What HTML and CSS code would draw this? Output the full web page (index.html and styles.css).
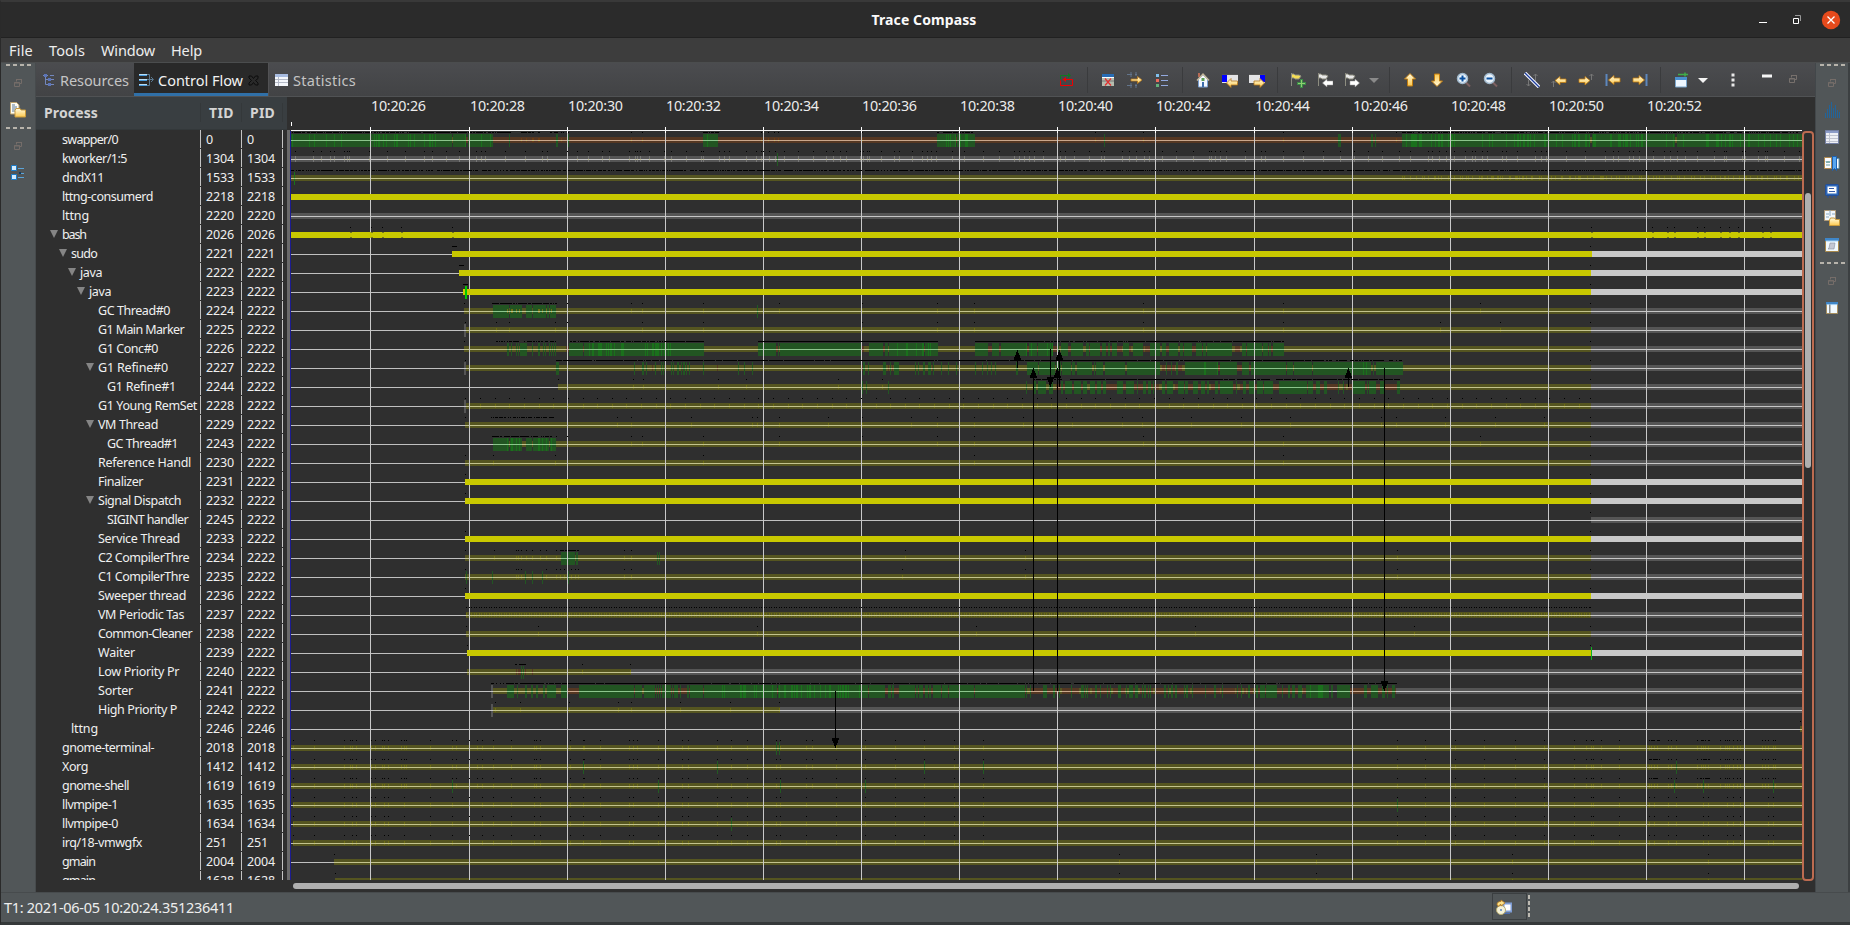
FILE: index.html
```html
<!DOCTYPE html>
<html lang="en">
<head>
<meta charset="utf-8">
<title>Trace Compass</title>
<link rel="stylesheet" href="styles.css">
</head>
<body>
<svg class="defs" width="0" height="0">
  <defs>
    <linearGradient id="gold" x1="0" y1="0" x2="0" y2="1"><stop offset="0" stop-color="#fffbe0"/><stop offset="1" stop-color="#fcc84e"/></linearGradient>
    <symbol id="arrow-left" viewBox="0 0 16 16"><path d="M1.500 8 6 3.500v2.500h6v4h-6v2.500z" fill="url(#gold)" stroke="#c07c10"/></symbol>
    <symbol id="arrow-up" viewBox="0 0 16 16"><path d="M8 1.500 13.500 7h-3v7h-5v-7h-3z" fill="url(#gold)" stroke="#c07c10"/></symbol>
    <symbol id="restore" viewBox="0 0 10 10"><path d="M3.500 3.500v-2h5v4h-2M1.500 4.500h5v4h-5zM3 1.500h6M1 5h6" fill="none" stroke="currentColor"/></symbol>
    <symbol id="flag" viewBox="0 0 16 16"><path d="M1.500 1v13M2 2h2l1 1h4l2 1-2 3H5L4 6H2" fill="currentColor" stroke="#8d8d80"/></symbol>
    <symbol id="lens" viewBox="0 0 16 16"><path d="M9.500 10 14 14.500" stroke="#7d6060" stroke-width="2"/><circle cx="6.500" cy="6.500" r="5" fill="#eaf4fc" stroke="#a0b8cc" stroke-width="1.500"/><path d="M3.500 6.500h6" stroke="#0a50a0" stroke-width="2"/></symbol>
    <symbol id="window" viewBox="0 0 16 16"><path d="M1.500 1.500h13v13h-13z" fill="#f2faff" stroke="#a8894c"/><path d="M1 1h14v3H1z" fill="#3f86c8"/><path d="M2 4h12" stroke="#a4d0f4"/></symbol>
  </defs>
</svg>
<div class="app">
  <header class="titlebar">
    <span class="title fit" data-w="105">Trace Compass</span>
    <div class="win">
      <svg width="16" height="16"><path d="M4 10.500h8" stroke="#fff"/></svg>
      <svg width="16" height="16"><path d="M4.500 6.500h5v5h-5z" fill="none" stroke="#fff"/><path d="M6 3.500h5.500v5.500" fill="none" stroke="#999"/></svg>
      <svg width="20" height="20"><circle cx="10" cy="10" r="9.200" fill="#e64a1c"/><path d="m6.500 6.500 7 7m0-7-7 7" stroke="#fff" stroke-width="1.300"/></svg>
    </div>
  </header>
  <nav class="menu"><span class="fit" data-w="24">File</span><span class="fit" data-w="36">Tools</span><span class="fit" data-w="54">Window</span><span class="fit" data-w="31">Help</span></nav>
  <div class="main">
    <aside class="side left">
      <i class="grip"></i>
      <svg class="r1" width="10" height="10"><use href="#restore"/></svg>
      <svg class="r2" width="16" height="16"><path d="M.5.500h6l2.500 2.500v9h-8.500z" fill="#fdfdf4" stroke="#bda26c"/><path d="M2 3h3M2 5h5M2 7h4M2 9h3" stroke="#5a7898"/><path d="M5 8.500l1-2h4l1 1.500h4.500v7h-10.500z" fill="url(#gold)" stroke="#c99a3c"/></svg>
      <i class="grip g2"></i>
      <svg class="r1 r3" width="10" height="10"><use href="#restore"/></svg>
      <svg class="r4" width="14" height="15"><path d="M.5.500h5v5h-5zM.5 9.500h5v5h-5z" fill="#d4ecff" stroke="#1b7cc8"/><path d="M7 3.500h6M9 8.500h4M7 12.500h6" stroke="#5ba4d8"/><path d="M8 7h2v2H8z" fill="#0d3c66"/></svg>
    </aside>
    <section class="part">
      <div class="tabs">
        <div class="tab t1"><svg width="12" height="13"><path d="M2.500 2v9.500M2.500 6.500h4M2.500 11.500h4M0 2.500h5M7 2.500h4M8 6.500h3M8 11.500h3" stroke="#7387bd" fill="none"/><path d="M1 1h3v3H1zM5 5h3v3H5zM5 10h3v3H5z" fill="#5c75b8"/></svg><span class="fit" data-w="69">Resources</span></div>
        <div class="tab active"><svg width="16" height="14"><path d="M0 2h8M0 7h8M0 12h8" stroke="#4a9bdc" stroke-width="2"/><path d="M0 1.500h8M0 6.500h8M0 11.500h8" stroke="#b7dcf5"/><path d="M8 1.500h2.500v11H8M8 6.500h6M12 4l2.500 2.500L12 9" stroke="#5a7890" fill="none"/></svg><span class="fit" data-w="85">Control Flow</span><svg class="x" width="11" height="11"><path d="M1 1h2.500l2 2.500 2-2.500H10v2.500L7.500 5.500 10 8v2H7.500l-2-2.500-2 2.500H1V8l2.500-2.500L1 3z" fill="#292929" stroke="#0c0c0c"/></svg></div>
        <div class="tab t3"><svg width="13" height="12"><path d="M0 0h13v12H0z" fill="#f4f7fc"/><path d="M0 0h13v3H0z" fill="#a7bbe0"/><path d="M0 5.500h13M0 8.500h13M3.500 3v9" stroke="#b4bac8"/></svg><span class="fit" data-w="63">Statistics</span></div>
        <div class="tools">
          <b><svg viewBox="0 0 16 16"><path d="M1.500 8.500v5h12v-6h-8" stroke="#f00000" fill="none"/><path d="M7 5 3.500 7.500 7 10z" fill="#f00000"/><path d="M1.500 7V3.500h9" stroke="#0f7a22" fill="none"/><path d="M9 1l3 2.500L9 6z" fill="#0f7a22"/></svg></b>
          <hr>
          <b><svg viewBox="0 0 16 16"><path d="M2 3h12v11H2z" fill="#b5bcae"/><path d="M2 2h12v3H2z" fill="#286cb4"/><path d="M2 5.500h12" stroke="#fff"/><path d="M2 9h12" stroke="#777"/><path d="m5 6.500 6 7m0-7-6 7" stroke="#e03030" stroke-width="1.200"/></svg></b>
          <b><svg viewBox="0 0 16 16"><path d="M0 2.500h5M4 0v5M0 13.500h5M4 11v5M8 2.500h2M9 0v4M8 13.500h2M9 12v4" stroke="#63758c"/><path d="M4 7h6.500V4.500L15 8l-4.500 3.500V9H4z" fill="url(#gold)" stroke="#b8791c" stroke-width=".8"/></svg></b>
          <b><svg viewBox="0 0 16 16"><path d="M2 2h3v3H2z" fill="#7fc0ee"/><path d="M2 7h3v3H2z" fill="#ed6a5a"/><path d="M2 12h3v3H2z" fill="#63b27c"/><path d="M7 3.500h7M7 8.500h7M7 13.500h7" stroke="#93a9de"/></svg></b>
          <hr>
          <b><svg viewBox="0 0 16 16"><path d="M3.500 7v8h9V7L8 2.500z" fill="#f3f8ff" stroke="#7a9fd0"/><path d="M2 8.500 8 2l6 6.500" stroke="#c5b89a" stroke-width="1.500" fill="none"/><path d="M3 1h2v4H3z" fill="#b66b55"/><path d="M6.500 6h3v3h-3z" fill="#5b9c52"/><path d="M7 10h2v5H7z" fill="#3c6dac"/></svg></b>
          <b><svg viewBox="0 0 16 16"><path d="M0 2h16v9H0z" fill="#e4e4e6"/><path d="M0 2h16v1H0z" fill="#555"/><path d="M0 3h5v7H0z" fill="#0000ff"/><path d="M4.500 11 9 6.500V9h6.500v4H9v2.500z" fill="url(#gold)" stroke="#b8791c" stroke-width=".8"/></svg></b>
          <b><svg viewBox="0 0 16 16"><path d="M0 2h16v9H0z" fill="#e4e4e6"/><path d="M0 2h16v1H0z" fill="#555"/><path d="M11 3h5v7h-5z" fill="#0000ff"/><path d="M15.500 11 11 6.500V9H5v4h6v2.500z" fill="url(#gold)" stroke="#b8791c" stroke-width=".8"/></svg></b>
          <hr>
          <b><svg viewBox="0 0 16 16" color="#f5dd55"><use href="#flag"/><path d="M11.500 7v9M7 11.500h9" stroke="#3c8a48" stroke-width="3"/><path d="M11.500 8v7M8 11.500h7" stroke="#8ed070"/></svg></b>
          <b><svg viewBox="0 0 16 16" color="#e8e8e8"><use href="#flag"/><path d="M5.500 11 10 7v2h6v4h-6v2z" fill="#fff" stroke="#999" stroke-width=".5"/></svg></b>
          <b><svg viewBox="0 0 16 16" color="#e8e8e8"><use href="#flag"/><path d="M15.500 11 11 7v2H6v4h5v2z" fill="#fff" stroke="#999" stroke-width=".5"/></svg></b>
          <b class="dd"><svg viewBox="0 0 16 16"><path d="M3 6h10l-5 5z" fill="#8a8a8a"/></svg></b>
          <hr>
          <b><svg viewBox="0 0 16 16"><use href="#arrow-up"/></svg></b>
          <b><svg class="flipy" viewBox="0 0 16 16"><use href="#arrow-up"/></svg></b>
          <b><svg viewBox="0 0 16 16"><use href="#lens"/><path d="M6.500 3.500v6" stroke="#0a50a0" stroke-width="2"/></svg></b>
          <b><svg viewBox="0 0 16 16"><use href="#lens"/></svg></b>
          <hr>
          <b><svg viewBox="0 0 16 16"><path d="M4.500 14V8M11.500 9V2M9.500 4l2-2 2 2M2.500 12l2 2 2-2" stroke="#777" fill="none"/><path d="m1 1 14 14" stroke="#f4f6ff" stroke-width="3.400"/><path d="m1 1 14 14" stroke="#1c3c9c" stroke-width="1.200"/></svg></b>
          <b><svg viewBox="0 0 16 16"><path d="M2.500 15V9M.5 11l2-2 2 2" stroke="#777" fill="none"/><path d="M4 8.500 9 4.500v2.500h6v3.500H9V13z" fill="url(#gold)" stroke="#c07c10" stroke-width=".8"/></svg></b>
          <b><svg viewBox="0 0 16 16"><path d="M13.500 8V2M11.500 4l2-2 2 2" stroke="#777" fill="none"/><path d="M12 8.500 7 4.500v2.500H1v3.500h6V13z" fill="url(#gold)" stroke="#c07c10" stroke-width=".8"/></svg></b>
          <b><svg viewBox="0 0 16 16"><path d="M1.500 2v12" stroke="#5d87bd" stroke-width="2"/><path d="M3.500 8 9 3.500V6h6v4H9v2.500z" fill="url(#gold)" stroke="#c07c10" stroke-width=".8"/></svg></b>
          <b><svg viewBox="0 0 16 16"><path d="M14.500 2v12" stroke="#5d87bd" stroke-width="2"/><path d="M12.500 8 7 3.500V6H1v4h6v2.500z" fill="url(#gold)" stroke="#c07c10" stroke-width=".8"/></svg></b>
          <hr>
          <b><svg viewBox="0 0 16 16"><path d="M2.500 5.500h11v9.500h-11z" fill="#eef7ff" stroke="#7aa6cc"/><path d="M2 5h12v3H2z" fill="#4a90d0"/><path d="M5 2.500h5M12 .5v4M10 2.500h5" stroke="#3fae4a" stroke-width="1.500"/></svg></b>
          <b class="dd"><svg viewBox="0 0 16 16"><path d="M3 6h10l-5 5z" fill="#f4f4f4"/></svg></b>
          <b class="dots"><svg viewBox="0 0 16 16"><path d="M6.500 1.500h3v3h-3zM6.500 6.500h3v3h-3zM6.500 11.500h3v3h-3z" fill="#e8e8e8"/></svg></b>
          <b class="min"><svg viewBox="0 0 16 16"><path d="M3 5.500h10v3H3z" fill="#f6f6f6"/></svg></b>
          <b><svg class="rs" viewBox="0 0 10 10"><use href="#restore"/></svg></b>
        </div>
      </div>
      <div class="view">
        <div class="tree">
          <div class="thead"><span class="c1"><span class="fit" data-w="54">Process</span></span><span class="c2"><span class="fit" data-w="25">TID</span></span><span class="c3"><span class="fit" data-w="25">PID</span></span></div>
          <div class="rows" id="rows"></div>
        </div>
        <i class="sash"></i>
        <div class="chart">
          <svg id="chart" width="1512" height="783" viewBox="290 97 1512 783" shape-rendering="crispEdges"></svg>
          <div class="hscroll"></div>
        </div>
        <div class="vscroll"><i></i></div>
      </div>
    </section>
    <aside class="side right">
      <i class="grip"></i>
      <svg class="r1" width="10" height="10"><use href="#restore"/></svg>
      <svg class="q1" width="16" height="16"><path d="M1.500 16v-5M3.500 16V7M5.500 16V3M7.500 16V0M9.500 16V6M11.500 16V3M13.500 16V8M15.500 16v-6" stroke="#22649a" shape-rendering="crispEdges"/></svg>
      <svg class="q2" width="14" height="14"><path d="M.5.500h13v13H.5z" fill="#eef0f6" stroke="#7480a4"/><path d="M1 2h12" stroke="#8c9cc8" stroke-width="2"/><path d="M1 5.500h12M1 8.500h12M1 11.500h12M4.500 3v10" stroke="#c0c4d0"/></svg>
      <svg class="q3" width="16" height="16"><path d="M.5 1.500h7v11h-7z" fill="#fbfcff" stroke="#b08a50"/><path d="M2 5l1 2 1-2 1 2 1-2M2 9h4" stroke="#68a0a0" fill="none"/><path d="M13 2.500h2v10h-2" fill="#fff" stroke="#5b90b0"/><path d="M8.500.5h4v14l-2-2-2 2z" fill="#58a6f0" stroke="#1c60b0"/></svg>
      <svg class="q4" width="14" height="14"><rect x=".5" y=".5" width="13" height="11" rx="1" fill="#2f68b8" stroke="#234f9a"/><path d="M2.500 2.500h9v7h-9z" fill="#fff"/><path d="M4 4.500h5M4 7.500h6" stroke="#345aa8"/><path d="M2 13h10" stroke="#2450a0" stroke-dasharray="2 2"/></svg>
      <svg class="q5" width="16" height="16"><path d="M.5.500h11v10H.5z" fill="#f4f8fc" stroke="#b09a78"/><path d="M6 0v6M2 4h3M2 7h3M8 4h3" stroke="#8aa8c0"/><path d="M5.500 10l1-2h4l1 1.500h4v6h-10z" fill="url(#gold)" stroke="#c99a3c"/></svg>
      <svg class="q6" width="14" height="14" viewBox="1 1 14 14"><use href="#window" x="0" y="0" width="16" height="16"/><path d="M6 6h5l-1 6H4l1-1z" fill="#c4c8d4" stroke="#8890a0" stroke-width=".6"/></svg>
      <i class="grip g4"></i>
      <svg class="r1 q7" width="10" height="10"><use href="#restore"/></svg>
      <svg class="q8" width="12" height="12" viewBox="1 1 14 14"><use href="#window" x="0" y="0" width="16" height="16"/><path d="M5.500 4v10" stroke="#333"/></svg>
    </aside>
  </div>
  <footer class="status"><span class="fit" data-w="230">T1: 2021-06-05 10:20:24.351236411</span>
    <div class="job"><svg width="16" height="16"><path d="M7.500 4.500h8v8h-8z" fill="#fff" stroke="#7e9cd4" stroke-width="2"/><path d="M8 14.500h6" stroke="#4a6cb0"/><circle cx="5" cy="11" r="4.500" fill="#f4f1d8" stroke="#b8ac70"/><circle cx="5" cy="11" r="1" fill="#5a83c0"/><path d="M1 6c0-3 2-3.500 4-3.500V1l4 3-4 3V5.500C4 5.500 3 6 3 7.500z" fill="#fce28a" stroke="#b8791c" stroke-width=".8"/></svg></div><i class="vgrip"></i>
  </footer>
</div>
<script src="app.js"></script>
</body>
</html>
```
FILE: styles.css
```css
* { box-sizing: border-box; }
body { margin: 0; background: #2f2f2f; font-family: "Noto Sans", "Open Sans", sans-serif; font-size: 14.5px; color: #eee; overflow: hidden; }
svg { display: block; flex: none; }
.defs { position: absolute; }
.app { width: 1850px; height: 925px; display: flex; flex-direction: column; border-top: 2px solid #393939; border-bottom: 3px solid #35393a; border-left: 1px solid #2a2a2a; }
.fit { display: inline-block; white-space: pre; }
.titlebar { height: 36px; background: #2b2b2b; border-bottom: 1px solid #212121; display: grid; grid-template-columns: 1fr auto 1fr; align-items: center; }
.title { grid-column: 2; font-weight: bold; font-size: 14px; color: #fafafa; margin: 0 3px 0 0; }
.win { display: flex; justify-content: flex-end; align-items: center; padding-right: 9px; gap: 18px; }
.win svg:last-child { margin-left: -2px; }
.menu { height: 25px; background: #3d3d3d; display: flex; gap: 16px; padding-left: 8px; line-height: 25px; border-bottom: 1px solid #4b4d4e; }
.main { flex: 1; display: flex; min-height: 0; }
.side { background: #515658; display: flex; flex-direction: column; align-items: center; color: #756d69; }
.left { width: 35px; border-right: 1px solid #474b4d; }
.right { width: 35px; border-left: 1px solid #42474a; border-right: 2px solid #3c4042; }
.grip { width: 25px; height: 2px; margin-top: 1px; background: repeating-linear-gradient(90deg, #b7b3ab 0 4px, transparent 4px 7px); }
.r1 { margin-top: 12px; }
.r2 { margin-top: 14px; }
.g2 { margin-top: 9px; }
.r4 { margin-top: 14px; }
.q1 { margin-top: 14px; }
.q2 { margin-top: 12px; }
.q3 { margin-top: 12px; }
.q4 { margin-top: 12px; }
.q5 { margin-top: 12px; }
.q6 { margin-top: 12px; }
.g4 { margin-top: 10px; }
.q8 { margin-top: 16px; }
.part { flex: 1; min-width: 0; display: flex; flex-direction: column; }
.tabs { height: 34px; display: flex; background: linear-gradient(#4b4c4f, #424345); border-bottom: 1px solid #505254; color: #c4c4c4; }
.tab { display: flex; align-items: center; padding-left: 7px; }
.t1 { width: 98px; gap: 5px; }
.t3 { gap: 5px; padding-left: 6px; border-left: 1px solid #525254; }
.active { width: 134px; background: #292929; border-bottom: 3px solid #3070a8; color: #f2f2f2; padding: 4px 0 0 5px; gap: 3px; }
.x { margin-left: 2px; }
.tools { margin-left: auto; display: flex; align-items: center; padding-right: 8px; }
.tools b { width: 27px; display: flex; justify-content: center; }
.tools svg { width: 16px; height: 16px; }
.tools hr { width: 1px; height: 26px; margin: 0 6.5px; border: 0; background: #3a3b3d; }
.tools .dd { width: 17px; }
.tools .dots { margin-left: 8px; }
.tools .min { margin: -5px 0 0 7px; }
.tools .rs { width: 10px; height: 10px; margin: -2px 2px 0 0; color: #77706c; }
.flipy { transform: scaleY(-1); }
.view { flex: 1; display: flex; min-height: 0; background: #2f2f2f; }
.tree { width: 251px; display: flex; flex-direction: column; }
.thead { height: 33px; background: #393e41; display: flex; align-items: center; font-weight: bold; color: #d4d4d4; border-bottom: 1px solid #33383a; font-size: 14px; padding-bottom: 2px; }
.c1 { width: 165px; padding-left: 8px; border-right: 1px solid #34383a; }
.c2 { width: 41px; padding-left: 8px; border-right: 1px solid #34383a; }
.c3 { width: 41px; padding-left: 8px; border-right: 1px solid #34383a; }
.rows { height: 750px; overflow: hidden; font-size: 12.5px; }
.row { height: 19px; display: flex; padding-bottom: 1px; line-height: 20px; color: #f0f0f0; }
.name, .num { border-right: 1px solid #c4c4c4; white-space: pre; height: 18px; }
.name { width: 165px; display: flex; align-items: flex-start; }
.name span, .num span { display: inline-block; height: 19px; }
.num { width: 41px; padding-left: 5px; }
.fold { width: 8px; height: 8px; margin: 5px 4px 0 0; background: #858585; clip-path: polygon(0 0, 100% 0, 50% 100%); }
.sash { width: 3px; height: 750px; margin-top: 33px; background: #6a6a6a; }
.chart { width: 1512px; }
.hscroll { width: 1506px; height: 6px; margin: 3px 0 0 3px; border-radius: 3px; background: #afafaf; }
.vscroll { width: 12px; height: 750px; margin-top: 34px; border: 2px solid #bc6b50; border-radius: 4px; display: flex; justify-content: center; padding-top: 60px; }
.vscroll i { width: 6px; height: 275px; border-radius: 3px; background: #afafaf; }
.status { height: 30px; background: #515658; border-top: 1px solid #474b4d; display: flex; align-items: center; padding: 0 0 2px 3px; font-size: 14.5px; }
.job { width: 35px; height: 27px; margin-left: 1258px; border: 1px solid #3b3f41; display: flex; align-items: center; padding-left: 3px; }
.vgrip { width: 2px; height: 24px; margin-left: 1px; background: repeating-linear-gradient(#bdbab2 0 4px, transparent 4px 6px); }
.tlabel { font-size: 14.3px; fill: #ececec; }
```
FILE: app.js
```js
const fit = (el, w) => {
  const n = el.textContent.length;
  el.style.letterSpacing = ((w - el.getBoundingClientRect().width) / n).toFixed(3) + 'px';
};

// depth, foldable, name, tid, pid, name width
const rows = [
  [0,0,'swapper/0',0,0,56],[0,0,'kworker/1:5',1304,1304,65],[0,0,'dndX11',1533,1533,42],
  [0,0,'lttng-consumerd',2218,2218,91],[0,0,'lttng',2220,2220,27],[0,1,'bash',2026,2026,24],
  [1,1,'sudo',2221,2221,26],[2,1,'java',2222,2222,22],[3,1,'java',2223,2222,22],
  [4,0,'GC Thread#0',2224,2222,72],[4,0,'G1 Main Marker',2225,2222,86],[4,0,'G1 Conc#0',2226,2222,60],
  [4,1,'G1 Refine#0',2227,2222,70],[5,0,'G1 Refine#1',2244,2222,69],[4,0,'G1 Young RemSet',2228,2222,99],
  [4,1,'VM Thread',2229,2222,60],[5,0,'GC Thread#1',2243,2222,71],[4,0,'Reference Handl',2230,2222,93],
  [4,0,'Finalizer',2231,2222,45],[4,1,'Signal Dispatch',2232,2222,83],[5,0,'SIGINT handler',2245,2222,81],
  [4,0,'Service Thread',2233,2222,82],[4,0,'C2 CompilerThre',2234,2222,91],[4,0,'C1 CompilerThre',2235,2222,91],
  [4,0,'Sweeper thread',2236,2222,88],[4,0,'VM Periodic Tas',2237,2222,86],[4,0,'Common-Cleaner',2238,2222,94],
  [4,0,'Waiter',2239,2222,37],[4,0,'Low Priority Pr',2240,2222,81],[4,0,'Sorter',2241,2222,35],
  [4,0,'High Priority P',2242,2222,79],[1,0,'lttng',2246,2246,27],[0,0,'gnome-terminal-',2018,2018,92],
  [0,0,'Xorg',1412,1412,26],[0,0,'gnome-shell',1619,1619,67],[0,0,'llvmpipe-1',1635,1635,56],
  [0,0,'llvmpipe-0',1634,1634,56],[0,0,'irq/18-vmwgfx',251,251,80],[0,0,'gmain',2004,2004,33],[0,0,'gmain',1628,1628,33]
];
const box = document.getElementById('rows');
for (const [d, f, name, tid, pid, w] of rows) {
  const r = document.createElement('div');
  r.className = 'row';
  const pad = 26 + 9 * d - (f ? 12 : 0);
  r.innerHTML = `<div class="name" style="padding-left:${pad}px">${f ? '<i class="fold"></i>' : ''}<span>${name}</span></div>` +
    `<div class="num"><span>${tid}</span></div><div class="num"><span>${pid}</span></div>`;
  box.append(r);
  const s = r.querySelectorAll('span');
  fit(s[0], w);
  fit(s[1], String(tid).length * 7);
  fit(s[2], String(pid).length * 7);
}
document.querySelectorAll('.fit').forEach(e => fit(e, +e.dataset.w));

// ---- time graph ----
let seed = 7;
const rnd = () => (seed = (seed * 16807) % 2147483647) / 2147483647;
const X1 = 1802, END = 1591;
const grid = [370,469,567,665,763,861,959,1057,1155,1254,1352,1450,1548,1646,1744];
const ly = i => 140 + 19 * i;
const layer = { base: '', grid: '', thick: '', top: '' };
const rect = (l, x, y, w, h, c) => { layer[l] += `<rect x="${x}" y="${y}" width="${w}" height="${h}" fill="${c}"/>`; };
const style = {
  y: ['#555520', '#c3c38e', 3, 6], w: ['#555555', '#c6c6c6', 3, 6],
  o: ['#553722', '#c9a78c', 3, 6], g: ['#225522', '#8cc58c', 6, 13], k: ['#555555', '#c6c6c6', 6, 13]
};
const seg = (i, t, a, b) => {
  const y = ly(i);
  if (t === 'Y' || t === 'W') return rect('thick', a, y - 3, b - a, 6, t === 'Y' ? '#c8c800' : '#c8c8c8');
  const [c, lc, up, h] = style[t];
  rect('base', a, y - 6, b - a, 13, '#2f2f2f');
  rect('base', a, y - up, b - a, h, c);
  rect('base', a, y, b - a, 1, lc);
};
const tick = (i, x, c) => {
  const y = ly(i);
  const p = { y: ['#6e6e12', 2, 4], w: ['#777777', 3, 6], G: ['#1a701c', 6, 13], g: ['#225a22', 6, 13], o: ['#6c3c14', 2, 4] }[c];
  rect('base', x, y - p[1], 1, p[2], p[0]);
  rect('base', x, y, 1, 1, c === 'G' || c === 'g' ? '#86c886' : '#c0c088');
};
const dot = (i, x, w = 1) => rect('top', x, ly(i) - 8, w, 1, '#000');
const dots = (i, a, b, p) => { let s = -1; for (let x = a; x <= b; x++) { const on = x < b && rnd() < p; if (on && s < 0) s = x; if (!on && s >= 0) { dot(i, s, x - s); s = -1; } } };
const mix = (i, a, b, p, gap, run = 4) => {
  let x = a;
  while (x < b) {
    const green = rnd() < p;
    const n = Math.min(b - x, 1 + Math.floor(rnd() * (green ? run * p * 1.6 : run * (1 - p) * 1.6)));
    seg(i, green ? 'g' : rnd() < .8 ? gap : 'y', x, x + n);
    x += n;
  }
};
const brights = (i, a, b, p) => { for (let x = a; x < b; x++) if (rnd() < p) tick(i, x, 'G'); };
const list = (i, t, s) => s.split(' ').forEach(v => { const [a, b] = v.split('-').map(Number); seg(i, t, a, b || a + 1); });
const marks = (i, c, s) => s.split(' ').forEach(v => { tick(i, +v, c); dot(i, +v); });

for (let i = 0; i < 40; i++) rect('base', 291, ly(i), X1 - 291, 1, '#c0c0c0');

// swapper/0
seg(0, 'o', 465, 1402);
list(0, 'g', '291-465 468-493 509 556-558 567-569 703-718 937-956 957-975 1104 1338-1341 1371-1373 1375 1402-1802');
brights(0, 292, 493, .16); brights(0, 1402, 1801, .22); brights(0, 705, 717, .2); brights(0, 940, 972, .2);
list(0, 'y', '452 1590-1592 1675-1677');
dots(0, 291, 510, .75); dots(0, 510, 570, .25); dots(0, 703, 719, .8); dots(0, 937, 975, .8); dots(0, 1402, X1, .7);
marks(0, 'o', '521 526 532 533 538 539 561 631 642 761 768 774 778 862 1095 1143 1283 1396');
// kworker, dndX11
seg(1, 'w', 291, X1);
for (let x = 295; x < X1; x += 2 + Math.floor(rnd() * 19)) { tick(1, x, 'w'); dot(1, x); }
tick(1, 777, 'g');
seg(2, 'y', 291, X1);
dots(2, 291, X1, .72); tick(2, 294, 'G');
for (let x = 1402; x < X1; x += 1 + Math.floor(rnd() * 7)) tick(2, x, 'y');
// steady threads
seg(3, 'Y', 291, X1); seg(4, 'w', 291, X1); seg(5, 'Y', 291, X1);
[350,371,382,401,452,1591,1652,1667,1674,1697,1704,1720,1729,1738,1762,1770].forEach(x => {
  dot(5, x); rect('thick', x, ly(5) - 3, 2, 1, '#77771c'); rect('thick', x, ly(5) + 2, 2, 1, '#77771c');
});
[[6,452],[7,459],[8,463],[18,465],[19,465],[21,465],[24,465],[27,467]].forEach(([i, a]) => {
  const e = i === 6 ? END + 1 : END;
  seg(i, 'Y', a, e); seg(i, 'W', e, X1); dot(i, a, i < 9 ? 5 : 1); dot(i, 1590);
});
rect('thick', 465, ly(8) - 6, 2, 13, '#00c800'); rect('thick', 1591, ly(27) - 6, 1, 13, '#10b020');
// dim threads
[[9,464],[10,465],[11,464],[12,465],[13,558],[14,465],[15,465],[16,493],[17,465],[22,465],[23,465],[25,466],[26,466]].forEach(([i, a]) => {
  seg(i, 'y', a, END); seg(i, 'w', END, X1); dot(i, a); dot(i, 1590);
});
[10,12,14].forEach(i => seg(i, 'k', 464, 466));
seg(20, 'w', END, X1); dot(20, 1590);
[9,16].forEach(i => {
  list(i, 'g', '493-509 510-522 526-532 533-546 547-549 550-556');
  [507,511,512,516,519,538,539,542,546,551].forEach(x => tick(i, x, i === 9 ? 'y' : 'G'));
  dots(i, 492, 557, .75);
  marks(i, 'y', '567 631 642 703 779 862 937 974 1143 1283 1480');
});
tick(9, 757, 'g');
marks(10, 'y', '496 509 555 567 642 703 862 937 974 1143 1283 1440 1500');
list(11, 'g', '507-509 511 516 518 520-527 532 538-540 543 545 549 551 553 555 569-583 584-704 758-776 778 780-862 869-883 885-888 889-924 925-938');
list(11, 'o', '566-569 583 776-778 862-864 883 884 924');
brights(11, 588, 624, .45); brights(11, 644, 672, .4); brights(11, 895, 936, .3);
mix(11, 975, 1050, .82, 'o', 6); mix(11, 1050, 1284, .66, 'o', 4);
dots(11, 496, 556, .6); dots(11, 569, 704, .8); rect('top', 758, ly(11) - 8, 180, 1, '#000'); rect('top', 975, ly(11) - 8, 60, 1, '#000'); dots(11, 1035, 1284, .92);
brights(11, 1024, 1060, .12);
list(12, 'g', '556-559 634 642-644 646 655 661 663 671 673 677-679 681-685 686 689 703 738 744 752 863-865 868 883-886 890 894-899 915 918 923-925 928-931 933 941 948 956 975 982 987 991 995 1016-1018');
list(12, 'o', '652 682 717 862 888 892 932');
mix(12, 1027, 1137, .75, 'y'); seg(12, 'g', 1137, 1156); mix(12, 1156, 1268, .6, 'o'); mix(12, 1268, 1352, .8, 'o', 5); seg(12, 'g', 1352, 1403);
list(12, 'y', '1371-1373 1374-1376'); brights(12, 1200, 1220, .2); brights(12, 1352, 1368, .2);
dots(12, 556, 1300, .95); dots(12, 1300, 1403, .75);
list(13, 'g', '862 866 888 1026 1033-1036 1038-1046 1049-1053');
mix(13, 1056, 1400, .55, 'o'); list(13, 'g', '1279-1307 1352-1365 1369-1376');
marks(13, 'y', '633 643 718 746 838 882'); dots(13, 1034, 1062, .9); dots(13, 1070, 1270, .93); dots(13, 1275, 1400, .85);
for (let x = 480; x < END; x += 14.65) marks(14, 'y', '' + Math.round(x));
marks(15, 'y', '617 631 691 752 757 779 828 862 911 937 974 1023 1072 1122 1142 1191 1241 1290 1381 1396 1445 1495 1544');
dots(15, 491, 556, .65);
marks(17, 'y', '493 555 703 974 1283');
list(22, 'g', '561-575 576-578 657 659'); marks(22, 'y', '494 516 518 521 526 532 540 546 556 624 631 905 1025 1397'); dots(22, 560, 579, .9);
list(23, 'g', '466 492 525 532 542 568'); marks(23, 'y', '516 518 521 546 556 560 564 571 575 578 624 631 902 1025 1397');
for (let x = 466; x < END; x += 2.5) { const p = Math.round(x); tick(25, p, 'y'); dot(25, p); }
marks(26, 'y', '538 757 976 1195 1414');
seg(28, 'y', 467, 631); seg(28, 'w', 631, X1); list(28, 'o', '516 518-521 532 525'); list(28, 'g', '521 523'); marks(28, 'y', '582 630'); dots(28, 515, 527, .7);
// Sorter
seg(29, 'y', 492, 507); seg(29, 'k', 491, 493); mix(29, 507, 568, .45, 'y', 3); seg(29, 'o', 568, 579); seg(29, 'g', 579, 1025);
list(29, 'o', '634 655 657 659 661 671 673 678-680 681-687 689 703 777 868 885-888 891 894-899 915 918 923-925 928 931-933 941 948 974');
brights(29, 720, 860, .22); list(29, 'y', '642-644');
mix(29, 1025, 1145, .38, 'o', 2); mix(29, 1145, 1260, .3, 'o', 2); mix(29, 1260, 1307, .45, 'o', 3);
list(29, 'g', '1307-1329 1331-1333 1337-1350 1364-1367 1371-1378 1382-1385 1387 1392-1395'); seg(29, 'o', 1350, 1364);
list(29, 'o', '1367-1371 1378-1382 1385-1387 1388-1392 1395'); seg(29, 'w', 1396, X1);
brights(29, 1308, 1328, .25); dots(29, 491, 570, .8); dots(29, 570, 1397, .95);
seg(30, 'y', 492, 780); seg(30, 'w', 780, X1); seg(30, 'k', 491, 493); marks(30, 'y', '495 520 569 618 631 680 730 779');
seg(31, 'y', 1800, X1); dot(31, 1800);
const burst = '293 314 344 352 356 371 375 384 388 404 430 452 469 482 493 511 534 540 570 583 600 629 633 658 682 688 717 731 747 776 780 806 836 865 895 924 954 983 1397 1425 1455 1484 1515 1544 1574 1591 1593 1619 1649 1654 1668 1676 1703 1708 1727 1733 1740 1768 1773';
for (let i = 32; i < 38; i++) {
  seg(i, 'y', i < 35 ? 291 : 293, X1);
  marks(i, 'y', burst);
  if (i < 35) { marks(i, 'y', '350 382 401 406 456 477 536 584 637 812 1586 1601 1651 1657 1671 1697 1701 1705 1720 1725 1729 1737 1762 1765 1775'); dots(i, 1650, 1660, .5); dots(i, 1700, 1710, .6); }
}
[[32,776],[32,779],[33,583],[33,717],[33,924],[33,983],[33,1676],[34,452],[34,658],[34,780],[34,865],[34,1674],[34,1703],[34,1773],[35,1397],[36,731]].forEach(([i, x]) => tick(i, x, 'g'));
seg(38, 'y', 334, X1); seg(39, 'y', 335, X1); dot(38, 334); dot(39, 335);
[38,39].forEach(i => marks(i, 'y', '1119 1316 1512 1708'));

// axis and grid lines
grid.forEach((x, n) => {
  rect('grid', x, 130, 1, 750, '#c8c8c8');
  rect('top', x, 127, 1, 6, '#fff');
  if (n < 14) layer.top += `<text class="tlabel" x="${x + 1}" y="111" textLength="55" lengthAdjust="spacing">10:20:${26 + 2 * n}</text>`;
});
rect('top', 291, 130, 1511, 1, '#f4f4f4');
rect('top', 291, 122, 1, 4, '#fff');
rect('top', 290, 131, 1, 749, '#1c1c90');
// dependency arrows: x, from, tip
[[835,691,748],[1017,368,350],[1033,691,368],[1050,349,387],[1059,387,350],[1057,691,368],[1348,387,368],[1384,368,691]].forEach(([x, a, b]) => {
  const s = b > a ? -1 : 1;
  rect('top', x, Math.min(a, b), 1, Math.abs(a - b), '#000');
  layer.top += `<path d="M${x + .5} ${b}l4 ${s * 10}h-8z" fill="#000"/>`;
});
document.getElementById('chart').innerHTML = layer.base + layer.grid + layer.thick + layer.top;
```
